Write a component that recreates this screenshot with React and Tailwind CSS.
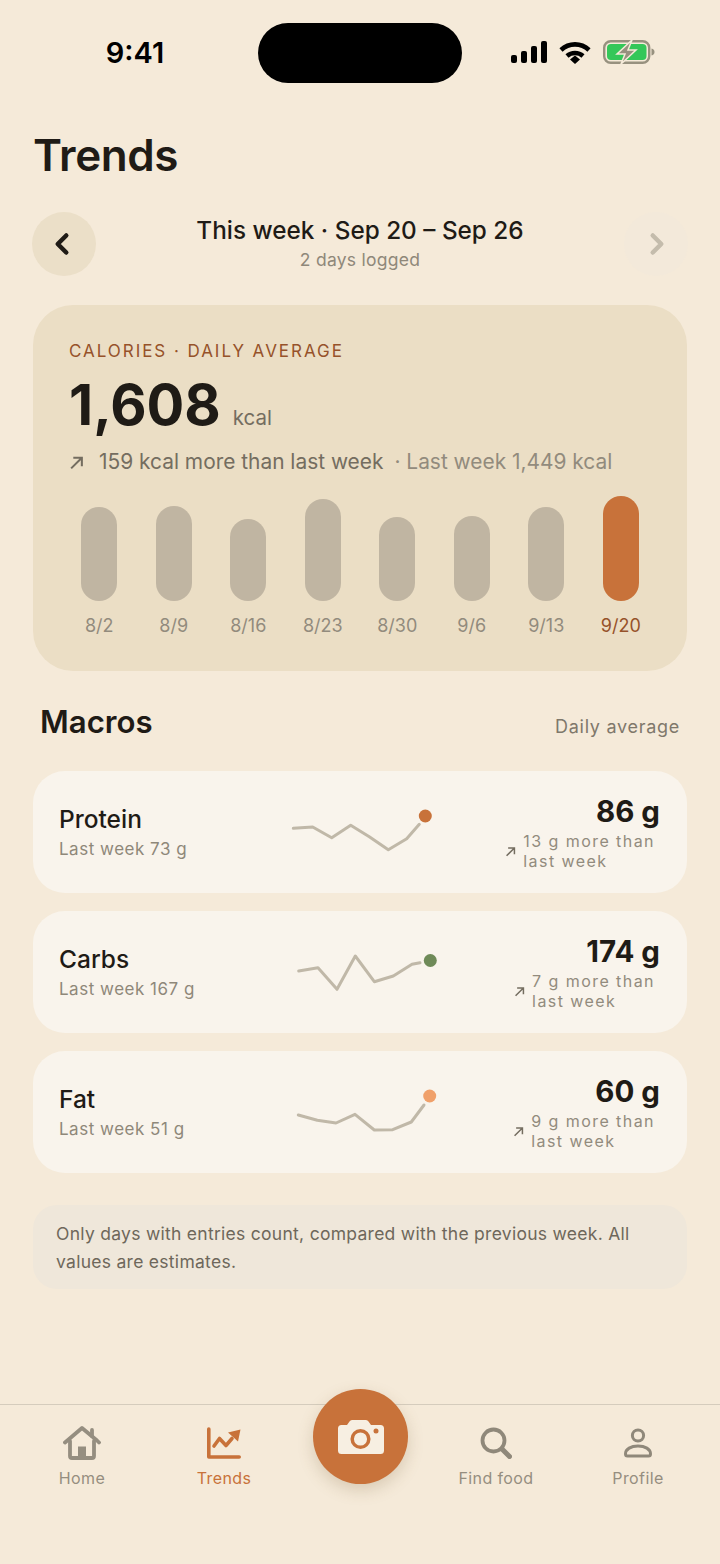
import { ChevronLeft, ChevronRight } from 'lucide-react'

const bars = [
  { label: '8/2', h: 'h-[94px]' },
  { label: '8/9', h: 'h-[95px]' },
  { label: '8/16', h: 'h-[82px]' },
  { label: '8/23', h: 'h-[102px]' },
  { label: '8/30', h: 'h-[84px]' },
  { label: '9/6', h: 'h-[85px]' },
  { label: '9/13', h: 'h-[94px]' },
  { label: '9/20', h: 'h-[105px]', active: true },
]

// sparkline points are in page px minus the svg origin (290, card top)
const macros = [
  {
    name: 'Protein', last: 'Last week 73 g', value: '86 g', delta: '13 g more than',
    points: '3.3,57.3 22.7,56 41.7,66.7 60.7,54.3 79.3,65.7 98.3,78.7 116.7,67.7 129.3,53.3',
    dot: 'fill-[#c8723a]', cx: 135.3, cy: 45,
  },
  {
    name: 'Carbs', last: 'Last week 167 g', value: '174 g', delta: '7 g more than',
    points: '8.7,60 28,56.7 47,78.3 65.3,45 84.3,70.7 103.3,65 122,53.3 130,51.7',
    dot: 'fill-[#6f8a58]', cx: 140.3, cy: 49.5,
  },
  {
    name: 'Fat', last: 'Last week 51 g', value: '60 g', delta: '9 g more than',
    points: '8.3,64 27.3,69.3 46,72 65,63.3 84.3,79 102.7,78.7 121.3,71 134,54',
    dot: 'fill-[#f0a06a]', cx: 139.7, cy: 45,
  },
]

function UpArrow({ className }) {
  return (
    <svg viewBox="0 0 14 14" className={className} fill="none" stroke="currentColor" strokeWidth="1.9">
      <path d="M2 12.5 12 2.500M4 2.500H12V10.500" />
    </svg>
  )
}

function HomeIcon() {
  return (
    <svg viewBox="0 0 38 34" className="w-[38px] h-[34px] text-[#958e80]" fill="none" stroke="currentColor" strokeWidth="3.800" strokeLinecap="round" strokeLinejoin="round">
      <path d="M2 16.500 19 2l15 12.500 2 2" />
      <path d="M29 4v6" />
      <path d="M7 15v15a2 2 0 0 0 2 2h20a2 2 0 0 0 2-2V15" />
      <path d="M15 32V20.500h8V32z" fill="currentColor" stroke="none" />
    </svg>
  )
}

function TrendsIcon() {
  return (
    <svg viewBox="0 0 34 32" className="w-[34px] h-[32px] text-[#c8723a]" fill="none" stroke="currentColor" strokeWidth="3.600" strokeLinecap="round" strokeLinejoin="round">
      <path d="M1.800 2v28h30.400" />
      <path d="M7 19 12.500 11.500l6.500 7 6-7" />
      <path d="M21 5.500 33.500 2.500 31 14.500z" fill="currentColor" stroke="none" />
    </svg>
  )
}

function SearchIcon() {
  return (
    <svg viewBox="0 0 32 32" className="w-[32px] h-[32px] text-[#8f887a]" fill="none" stroke="currentColor" strokeLinecap="round">
      <circle cx="13.500" cy="13.500" r="11" strokeWidth="3.800" />
      <path d="M22.500 22.500l7 7" strokeWidth="5" />
    </svg>
  )
}

function ProfileIcon() {
  return (
    <svg viewBox="0 0 30 30" className="w-[30px] h-[30px] text-[#8f887a]" fill="none" stroke="currentColor" strokeWidth="3">
      <circle cx="15" cy="7.500" r="5.600" />
      <path d="M2.500 26c0-5 5.500-8 12.500-8s12.500 3 12.500 8c0 1.400-.8 2-2 2h-21c-1.200 0-2-.6-2-2z" />
    </svg>
  )
}

function StatusIcons() {
  return (
    <div className="flex items-center gap-[12px]">
      <div className="flex items-end gap-[4px] h-[22px]">
        <div className="w-[6px] h-[8px] rounded-[2px] bg-black" />
        <div className="w-[6px] h-[12px] rounded-[2px] bg-black" />
        <div className="w-[6px] h-[17px] rounded-[2px] bg-black" />
        <div className="w-[6px] h-[22px] rounded-[2px] bg-black" />
      </div>
      <svg viewBox="0 0 32 23" className="w-[32px] h-[23px]" fill="none" stroke="black" strokeWidth="4.600">
        <path d="M2 9C10 1.500 22 1.500 30 9" />
        <path d="M8 15c4.500-4 11.500-4 16 0" />
        <path d="M11 18.500 16 14.500l5 4L16 23z" fill="black" stroke="none" />
      </svg>
      <svg viewBox="0 0 52 24" className="w-[52px] h-[24px]">
        <rect x="1.200" y="1.200" width="45" height="21.600" rx="6.500" fill="none" stroke="#97917f" strokeWidth="2.400" />
        <rect x="4" y="4" width="39.500" height="16" rx="4" fill="#34c759" />
        <path d="M48.500 8.500c2 .5 3 1.700 3 3.500s-1 3-3 3.500z" fill="#97917f" />
        <path d="M29 0 14 14h8l-4 10L33 10h-8z" fill="#97917f" stroke="#f5ead9" strokeWidth="1.500" />
      </svg>
    </div>
  )
}

function NavItem({ label, active, children }) {
  return (
    <div className={`w-[142px] flex flex-col items-center ${active ? 'text-[#c8723a]' : 'text-[#958e80]'}`}>
      <div className="h-[34px] flex items-center justify-center">{children}</div>
      <span className="mt-[7px] text-[16px] leading-[22px] tracking-[0.025em]">{label}</span>
    </div>
  )
}

export default function App() {
  return (
    <div className="relative w-[720px] h-[1564px] flex flex-col bg-[#f5ead9] text-[#1f1b16] font-['Inter',sans-serif] overflow-hidden">
      {/* Status bar */}
      <div className="flex items-center pt-[23px]">
        <div className="w-[258px] flex justify-center pl-[12px] text-[29px] leading-[60px] font-semibold text-black">9:41</div>
        <div className="w-[204px] h-[60px] rounded-[30px] bg-black" />
        <div className="w-[258px] pl-[49px] -mt-[2px]"><StatusIcons /></div>
      </div>

      <h1 className="mt-[42px] ml-[33px] text-[44px] leading-[60px] font-semibold tracking-[-0.01em]">Trends</h1>

      {/* Week switcher */}
      <div className="mt-[27px] px-[32px] flex items-center justify-between">
        <div className="w-[64px] h-[64px] rounded-full bg-[#ebdfc8] flex items-center justify-center">
          <ChevronLeft size={34} strokeWidth={3.2} className="text-[#1f1b16] -ml-[4px]" />
        </div>
        <div className="text-center">
          <div className="text-[24.300px] leading-[32px] font-medium">This week · Sep 20 – Sep 26</div>
          <div className="text-[17.500px] leading-[28px] text-[#8f887a] tracking-[0.015em]">2 days logged</div>
        </div>
        <div className="w-[64px] h-[64px] rounded-full bg-[#f3e9da] flex items-center justify-center">
          <ChevronRight size={34} strokeWidth={3.2} className="text-[#c4bcac] ml-[2px]" />
        </div>
      </div>

      {/* Calories */}
      <div className="mt-[29px] mx-[33px] h-[366px] rounded-[40px] bg-[#ebdec5] pt-[34px] px-[29px]">
        <div className="ml-[7px] text-[17px] leading-[24px] tracking-[0.115em] uppercase text-[#96522a]">Calories · Daily average</div>
        <div className="ml-[7px] mt-[9px] flex items-baseline">
          <span className="text-[56px] leading-[66px] font-bold">1,608</span>
          <span className="ml-[12px] text-[20.500px] text-[#746d60]">kcal</span>
        </div>
        <div className="ml-[7px] mt-[9px] flex items-center text-[20.900px] leading-[30px]">
          <UpArrow className="w-[15px] h-[15px] mr-[15px] text-[#746d60]" />
          <span className="text-[#746d60]">159 kcal more than last week</span>
          <span className="ml-[11px] text-[#928b7d]">· Last week 1,449 kcal</span>
        </div>
        <div className="mt-[19px] grid grid-cols-8 w-[596px]">
          {bars.map((b) => (
            <div key={b.label} className="flex flex-col items-center">
              <div className="h-[105px] flex items-end">
                <div className={`w-[36px] ${b.h} rounded-[18px] ${b.active ? 'bg-[#c8723a]' : 'bg-[#c0b5a2]'}`} />
              </div>
              <span className={`mt-[12px] text-[18px] leading-[26px] ${b.active ? 'text-[#96522a]' : 'text-[#928b7d]'}`}>{b.label}</span>
            </div>
          ))}
        </div>
      </div>

      {/* Macros */}
      <div className="mt-[31px] pl-[40px] pr-[40px] flex items-center justify-between">
        <h2 className="text-[31.200px] leading-[40px] font-semibold">Macros</h2>
        <span className="mt-[9px] text-[18px] leading-[26px] tracking-[0.04em] text-[#7f786b]">Daily average</span>
      </div>

      <div className="mt-[29px] mx-[33px] flex flex-col gap-[18px]">
        {macros.map((m) => (
          <div key={m.name} className="h-[122px] rounded-[32px] bg-[#f9f4ec] flex items-center pl-[26px] pr-[27px]">
            <div className="w-[231px] -mt-[2px]">
              <div className="text-[24.500px] leading-[34px] font-medium">{m.name}</div>
              <div className="text-[17px] leading-[24px] tracking-[0.03em] text-[#8f887a] mt-[1px]">{m.last}</div>
            </div>
            <svg viewBox="0 0 150 122" className="w-[150px] h-[122px] shrink-0" fill="none">
              <polyline points={m.points} className="stroke-[#c0b8a8]" strokeWidth="3" strokeLinejoin="round" strokeLinecap="round" />
              <circle cx={m.cx} cy={m.cy} r="6.500" className={m.dot} />
            </svg>
            <div className="flex-1 flex flex-col items-end mt-[1px]">
              <div className="text-[29.500px] leading-[34px] font-bold">{m.value}</div>
              <div className="flex items-center gap-[7px] pr-[5px] mt-[4px] text-[#928b7d] text-[16px] leading-[19.500px] tracking-[0.09em]">
                <UpArrow className="w-[11px] h-[11px] text-[#746d60]" />
                <div>{m.delta}<br />last week</div>
              </div>
            </div>
          </div>
        ))}
      </div>

      {/* Footnote */}
      <div className="mt-[32px] mx-[33px] h-[84px] rounded-[24px] bg-[#efe7da] px-[23px] py-[15px] text-[17.500px] leading-[28px] tracking-[0.016em] text-[#6e675b]">
        Only days with entries count, compared with the previous week. All values are estimates.
      </div>

      {/* Tab bar */}
      <div className="mt-auto relative h-[160px] border-t border-[#d5ccbd] flex px-[11px] pt-[21px]">
        <NavItem label="Home"><HomeIcon /></NavItem>
        <NavItem label="Trends" active><TrendsIcon /></NavItem>
        <div className="w-[130px]" />
        <NavItem label="Find food"><SearchIcon /></NavItem>
        <NavItem label="Profile"><ProfileIcon /></NavItem>
        <div className="absolute left-[313px] -top-[16px] w-[95px] h-[95px] rounded-full bg-[#c8723a] shadow-[0_6px_16px_rgba(120,90,50,0.22)] flex items-center justify-center">
          <svg viewBox="0 0 46 34" className="w-[46px] h-[34px]">
            <path d="M3.500 5H9l2.500-3.500A3 3 0 0 1 14 0h14a3 3 0 0 1 2.500 1.500L33 5h9.500A3.500 3.500 0 0 1 46 8.500v22a3.500 3.500 0 0 1-3.500 3.500h-39A3.500 3.500 0 0 1 0 30.500v-22A3.500 3.500 0 0 1 3.500 5z" fill="#f7efe2" />
            <circle cx="22.500" cy="19" r="8.300" fill="none" stroke="#c8723a" strokeWidth="3.500" />
            <circle cx="38" cy="11" r="2.500" fill="#c8723a" />
          </svg>
        </div>
      </div>
    </div>
  )
}
